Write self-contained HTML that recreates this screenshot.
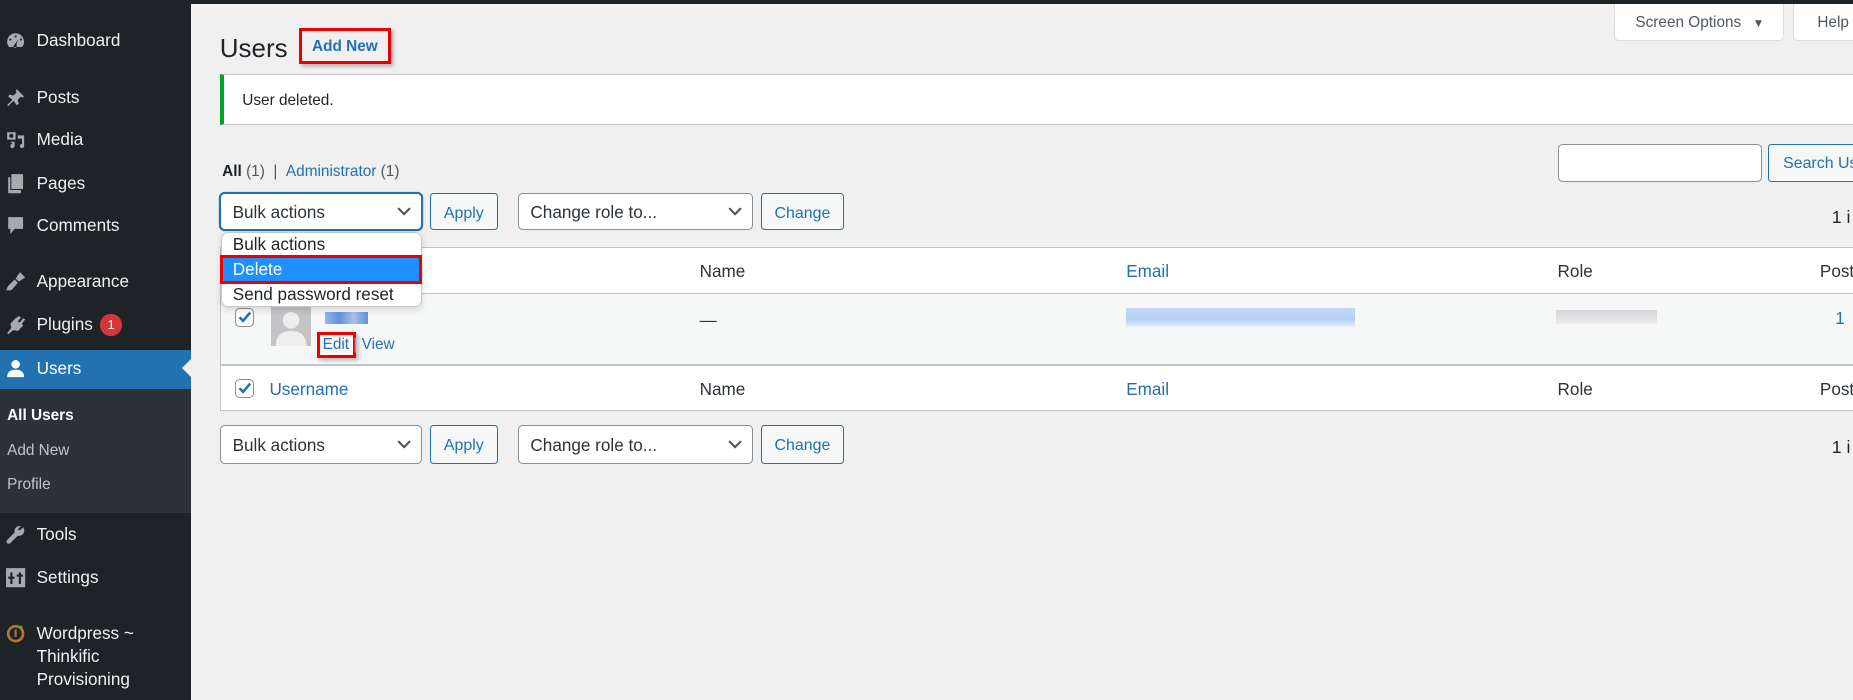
<!DOCTYPE html>
<html><head><meta charset="utf-8">
<style>
html,body{margin:0;padding:0;overflow:hidden;}
body{width:1568px;height:592px;zoom:1.18176;background:#f0f0f1;font-family:"Liberation Sans",sans-serif;position:relative;color:#1d2327;}
.a{position:absolute;white-space:nowrap;}
#top{left:0;top:0;width:1568px;height:3px;background:#1d2327;}
#side{left:0;top:0;width:162px;height:592px;background:#1d2327;}
.mi{position:absolute;left:31px;font-size:14.5px;color:#f0f0f1;line-height:18px;white-space:nowrap;}
.ic{position:absolute;left:4px;width:18px;height:18px;fill:#a7aaad;}
.sub{position:absolute;left:6px;font-size:13px;color:#c3c4c7;line-height:16px;}
.btn{position:absolute;border:1px solid #2271b1;border-radius:3px;background:#f6f7f7;color:#2271b1;font-size:13.5px;text-align:center;box-sizing:border-box;white-space:nowrap;overflow:hidden;}
.sel{position:absolute;border:1px solid #8c8f94;border-radius:4px;background:#fff;font-size:14.5px;box-sizing:border-box;padding-left:10px;color:#2c3338;white-space:nowrap;}
.sel svg{position:absolute;right:8px;top:50%;margin-top:-4px;}
.th{position:absolute;font-size:14.5px;color:#2c3338;white-space:nowrap;}
.lk{color:#2271b1;}
.cb{position:absolute;width:16px;height:16px;border:1px solid #8c8f94;border-radius:4px;background:#fff;box-sizing:border-box;}
</style></head><body>
<div id="side" class="a">
  <svg class="ic" style="top:25px" viewBox="0 0 20 20"><path d="M10 3a8 8 0 0 0-8 8c0 2 .7 3.6 1.9 5h12.2A8 8 0 0 0 10 3zm0 2a1 1 0 1 1 0 2 1 1 0 0 1 0-2zM5 8a1 1 0 1 1 0 2 1 1 0 0 1 0-2zm10 0a1 1 0 1 1 0 2 1 1 0 0 1 0-2zm-3 1l-1.3 5a1.6 1.6 0 1 1-1.5-.4z"/></svg>
  <div class="mi" style="top:25px">Dashboard</div>
  <svg class="ic" style="top:74px" viewBox="0 0 20 20"><path d="M11 2l7 7-2 1-1-1-3 3 1 4-2 1-3-4-5 5-1-1 5-5-4-3 1-2 4 1 3-3-1-1z"/></svg>
  <div class="mi" style="top:74px">Posts</div>
  <svg class="ic" style="top:109px" viewBox="0 0 20 20"><path d="M2 3h8v7H2zm4 1.5a2 2 0 1 0 0 4 2 2 0 0 0 0-4zM12 6h6v10a2 2 0 1 1-2-2V9h-4zM5 12h4v4a2 2 0 1 1-2-2z"/></svg>
  <div class="mi" style="top:109px">Media</div>
  <svg class="ic" style="top:146px" viewBox="0 0 20 20"><path d="M6 1h11v14H6zM3 4h2v12h10v3H3z"/></svg>
  <div class="mi" style="top:146px">Pages</div>
  <svg class="ic" style="top:182px" viewBox="0 0 20 20"><path d="M3 2h14v11H9l-4 5v-5H3z"/></svg>
  <div class="mi" style="top:182px">Comments</div>
  <svg class="ic" style="top:229px" viewBox="0 0 20 20"><path d="M14 1l5 5-6 4-3-3zM9 8l3 3-5 6c-2 2-5 1-6 1 1-1 1-3 2-4z"/></svg>
  <div class="mi" style="top:229px">Appearance</div>
  <svg class="ic" style="top:266px" viewBox="0 0 20 20"><path d="M13 2l2 1-3 4 2 1 3-4 2 1-3 4 1 2-5 5-4-1-5 4-1-1 4-5-1-4 5-5z"/></svg>
  <div class="mi" style="top:266px">Plugins</div>
  <div class="a" style="left:85px;top:266px;width:18px;height:18px;border-radius:9px;background:#d63638;color:#fff;font-size:11px;text-align:center;line-height:18px;">1</div>
  <div class="a" style="left:0;top:296px;width:162px;height:33px;background:#2271b1;"></div>
  <div class="a" style="left:154px;top:304px;width:0;height:0;border-top:8px solid transparent;border-bottom:8px solid transparent;border-right:8px solid #f0f0f1;"></div>
  <svg class="ic" style="top:303px;fill:#fff" viewBox="0 0 20 20"><circle cx="10" cy="6" r="4"/><path d="M2 18c0-5 3-7 8-7s8 2 8 7z"/></svg>
  <div class="mi" style="top:303px;color:#fff">Users</div>
  <div class="a" style="left:0;top:329px;width:162px;height:105px;background:#2c3338;"></div>
  <div class="sub" style="top:344px;color:#fff;font-weight:bold">All Users</div>
  <div class="sub" style="top:374px">Add New</div>
  <div class="sub" style="top:403px">Profile</div>
  <svg class="ic" style="top:443px" viewBox="0 0 20 20"><path d="M17 3l-3 3-2-1 3-3a5 5 0 0 0-6 6l-7 7a2 2 0 0 0 3 3l7-7a5 5 0 0 0 6-6z"/></svg>
  <div class="mi" style="top:443px">Tools</div>
  <svg class="ic" style="top:480px" viewBox="0 0 20 20"><path d="M1 1h18v18H1zm4 4v4H3v2h2v5h2v-5h2V9H7V5zm8 0v2h-2v2h2v7h2V9h2V7h-2V5z"/></svg>
  <div class="mi" style="top:480px">Settings</div>
  <svg class="ic" style="top:527px" viewBox="0 0 20 20"><circle cx="10" cy="10" r="7" fill="none" stroke="#b8732e" stroke-width="2.5"/><path d="M9 6h2v7H9z" fill="#b8732e"/><circle cx="15" cy="4" r="1.5" fill="#6a3"/></svg>
  <div class="mi" style="top:527px">Wordpress ~</div>
  <div class="mi" style="top:547px">Thinkific</div>
  <div class="mi" style="top:566px">Provisioning</div>
</div>
<div id="top" class="a"></div>

<div class="a" style="left:1366px;top:3px;width:144px;height:32px;background:#fff;border:1px solid #dcdcde;border-top:none;border-radius:0 0 4px 4px;box-sizing:border-box;font-size:13px;color:#50575e;line-height:32px;padding-left:17px;">Screen Options <span style="font-size:10px;margin-left:6px">&#9660;</span></div>
<div class="a" style="left:1517px;top:3px;width:60px;height:32px;background:#fff;border:1px solid #dcdcde;border-top:none;border-radius:0 0 4px 4px;box-sizing:border-box;font-size:13px;color:#50575e;line-height:32px;padding-left:20px;">Help</div>

<div class="a" style="left:186px;top:27px;font-size:22px;line-height:28px;color:#1d2327;">Users</div>
<div class="a" style="left:253px;top:24px;width:78px;height:30px;border:3px solid #e00;box-sizing:border-box;box-shadow:2px 2px 3px rgba(0,0,0,.25);"></div>
<div class="a" style="left:264px;top:32px;font-size:13px;font-weight:bold;color:#2271b1;">Add New</div>

<div class="a" style="left:186px;top:63px;width:1400px;height:43px;background:#fff;border:1px solid #c3c4c7;border-left:4px solid #00a32a;box-sizing:border-box;"></div>
<div class="a" style="left:205px;top:78px;font-size:13px;">User deleted.</div>

<div class="a" style="left:188px;top:138px;font-size:13px;color:#50575e;"><b style="color:#1d2327">All</b> (1) &nbsp;| &nbsp;<span class="lk">Administrator</span> (1)</div>

<div class="a" style="left:1318px;top:122px;width:173px;height:32px;border:1px solid #8c8f94;border-radius:4px;background:#fff;box-sizing:border-box;"></div>
<div class="btn" style="left:1496px;top:122px;width:90px;height:32px;line-height:32px;text-align:left;padding-left:12px;">Search Users</div>
<div class="a" style="left:1550px;top:175px;font-size:15px;">1 i</div>
<div class="a" style="left:1550px;top:370px;font-size:15px;">1 i</div>

<div class="sel" style="left:186px;top:163px;width:171px;height:32px;line-height:32px;border-color:#2271b1;box-shadow:0 0 0 1px #2271b1;">Bulk actions<svg width="12" height="8" viewBox="0 0 12 8"><path d="M1 1l5 5 5-5" fill="none" stroke="#50575e" stroke-width="1.8"/></svg></div>
<div class="btn" style="left:364px;top:163px;width:57px;height:32px;line-height:33px;">Apply</div>
<div class="sel" style="left:438px;top:163px;width:199px;height:32px;line-height:32px;">Change role to...<svg width="12" height="8" viewBox="0 0 12 8"><path d="M1 1l5 5 5-5" fill="none" stroke="#50575e" stroke-width="1.8"/></svg></div>
<div class="btn" style="left:644px;top:163px;width:70px;height:32px;line-height:33px;">Change</div>

<div class="a" style="left:186px;top:209px;width:1400px;height:139px;background:#fff;border:1px solid #c3c4c7;box-sizing:border-box;"></div>
<div class="a" style="left:187px;top:248px;width:1400px;height:62px;background:#f6f7f7;border-top:1px solid #c3c4c7;border-bottom:2px solid #c3c4c7;box-sizing:border-box;"></div>
<div class="th" style="left:592px;top:221px">Name</div>
<div class="th lk" style="left:953px;top:221px">Email</div>
<div class="th" style="left:1318px;top:221px">Role</div>
<div class="th" style="left:1540px;top:221px">Posts</div>

<div class="cb" style="left:199px;top:261px"><svg width="14" height="14" viewBox="0 0 14 14"><path d="M3 7l3 3 6-7" fill="none" stroke="#2271b1" stroke-width="2.2"/></svg></div>
<div class="a" style="left:229px;top:258px;width:34px;height:35px;background:#c3c4c7;overflow:hidden;"><svg width="34" height="35" viewBox="0 0 34 35"><circle cx="17" cy="13" r="7" fill="#eee"/><path d="M4 35c0-10 6-13 13-13s13 3 13 13z" fill="#eee"/></svg></div>
<div class="a" style="left:275px;top:264px;width:36px;height:10px;background:linear-gradient(90deg,#7fa8e8,#4a7fd6,#9ab9ea,#4a7fd6);opacity:.85"></div>
<div class="a" style="left:268px;top:281px;width:33px;height:22px;border:3px solid #e00;box-sizing:border-box;box-shadow:2px 2px 3px rgba(0,0,0,.25);"></div>
<div class="a" style="left:273px;top:284px;font-size:13px;" ><span class="lk">Edit</span> <span style="color:#999">|</span> <span class="lk">View</span></div>
<div class="th" style="left:592px;top:262px">—</div>
<div class="a" style="left:953px;top:261px;width:194px;height:16px;background:linear-gradient(180deg,#c4d8f5 0,#b5cff5 60%,#e9eff8 100%);"></div>
<div class="a" style="left:1317px;top:262px;width:85px;height:12px;background:linear-gradient(180deg,#d6d6da,#ececee);"></div>
<div class="th lk" style="left:1553px;top:261px">1</div>

<div class="cb" style="left:199px;top:321px"><svg width="14" height="14" viewBox="0 0 14 14"><path d="M3 7l3 3 6-7" fill="none" stroke="#2271b1" stroke-width="2.2"/></svg></div>
<div class="th lk" style="left:228px;top:321px">Username</div>
<div class="th" style="left:592px;top:321px">Name</div>
<div class="th lk" style="left:953px;top:321px">Email</div>
<div class="th" style="left:1318px;top:321px">Role</div>
<div class="th" style="left:1540px;top:321px">Posts</div>

<div class="sel" style="left:186px;top:360px;width:171px;height:33px;line-height:33px;">Bulk actions<svg width="12" height="8" viewBox="0 0 12 8"><path d="M1 1l5 5 5-5" fill="none" stroke="#50575e" stroke-width="1.8"/></svg></div>
<div class="btn" style="left:364px;top:360px;width:57px;height:33px;line-height:34px;">Apply</div>
<div class="sel" style="left:438px;top:360px;width:199px;height:33px;line-height:33px;">Change role to...<svg width="12" height="8" viewBox="0 0 12 8"><path d="M1 1l5 5 5-5" fill="none" stroke="#50575e" stroke-width="1.8"/></svg></div>
<div class="btn" style="left:644px;top:360px;width:70px;height:33px;line-height:34px;">Change</div>

<div class="a" style="left:187px;top:196px;width:170px;height:64px;background:#fff;border:1px solid #c8c8c8;border-radius:6px;box-sizing:border-box;box-shadow:0 2px 6px rgba(0,0,0,.15);"></div>
<div class="a" style="left:197px;top:198px;font-size:14.5px;color:#1d2327;">Bulk actions</div>
<div class="a" style="left:186px;top:216px;width:171px;height:24px;background:#1e90ff;border:3px solid #e00;box-sizing:border-box;"></div>
<div class="a" style="left:197px;top:219px;font-size:14.5px;color:#fff;">Delete</div>
<div class="a" style="left:197px;top:240px;font-size:14.5px;color:#1d2327;">Send password reset</div>
</body></html>
